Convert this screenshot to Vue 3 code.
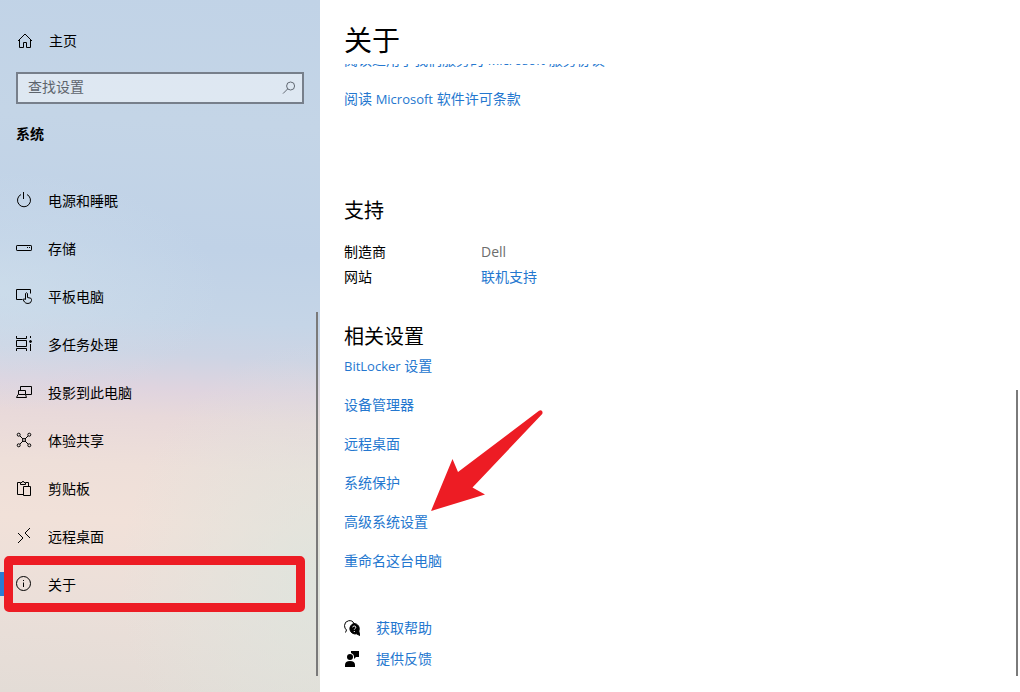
<script setup>
import { ref } from 'vue'

const query = ref('')

const navItems = [
  { id: 'power', label: '电源和睡眠' },
  { id: 'storage', label: '存储' },
  { id: 'tablet', label: '平板电脑' },
  { id: 'multitask', label: '多任务处理' },
  { id: 'project', label: '投影到此电脑' },
  { id: 'share', label: '体验共享' },
  { id: 'clipboard', label: '剪贴板' },
  { id: 'remote', label: '远程桌面' },
  { id: 'about', label: '关于', current: true },
]

const relatedLinks = ['设备管理器', '远程桌面', '系统保护', '高级系统设置', '重命名这台电脑']
</script>

<template>
  <div class="settings">
    <aside class="sidebar">
      <a class="home" href="#home">
        <svg class="icon" viewBox="0 0 16 16" aria-hidden="true">
          <path d="M1 8 8 1l7 7M2.500 6.500v8h4v-5h3v5h4v-8" />
        </svg>
        <span>主页</span>
      </a>

      <form class="search" role="search" @submit.prevent>
        <input v-model="query" type="text" placeholder="查找设置" aria-label="查找设置" />
        <button type="submit" aria-label="搜索">
          <svg class="icon" viewBox="0 0 16 16" aria-hidden="true">
            <circle cx="9.6" cy="6" r="4" />
            <path d="M6.8 8.8 2 13.6" />
          </svg>
        </button>
      </form>

      <h2 class="group">系统</h2>

      <nav class="nav" aria-label="系统">
        <a
          v-for="item in navItems"
          :key="item.id"
          class="nav-item"
          :class="{ current: item.current }"
          :aria-current="item.current ? 'page' : null"
          :href="'#' + item.id"
        >
          <svg class="icon" viewBox="0 0 16 16" aria-hidden="true">
            <template v-if="item.id === 'power'">
              <path d="M5 2.500a6.500 6.500 0 1 0 6 0M7.500 0v7" />
            </template>
            <template v-else-if="item.id === 'storage'">
              <rect x=".5" y="5.500" width="15" height="5" rx=".6" />
              <path d="M11 7.500h1M13 7.500h1" />
            </template>
            <template v-else-if="item.id === 'tablet'">
              <path d="M6.500 11.500h-6v-10h14v4" />
              <path d="M9.500 11.500V5.500q1-1.500 2 0v4l2.700.6q1.300.3 1.300 1.400v1q-.3 3-3.500 3-2.500 0-3.500-1.500L7 11.500q.8-1.200 2.500 0" />
            </template>
            <template v-else-if="item.id === 'multitask'">
              <path d="M.5 0v2.500h10V0M.5 15v-2.500h10V15M.5 4.500h10v6H.5zM14.500 0v2M14.500 8v7" />
              <circle class="solid" cx="14.500" cy="5.500" r="1" />
            </template>
            <template v-else-if="item.id === 'project'">
              <path d="M4.500 6.500v-4h11v8H10M2.500 6.500h7v4h-7zM2 10.500l-1.500 3h10l-1-3" />
            </template>
            <template v-else-if="item.id === 'share'">
              <circle cx="2.700" cy="2.700" r="1.500" />
              <circle cx="13.300" cy="2.700" r="1.500" />
              <circle cx="2.700" cy="13.300" r="1.500" />
              <circle cx="13.300" cy="13.300" r="1.500" />
              <circle cx="8" cy="8" r="1.500" />
              <path d="m4 4 3 3M12 4 9 7M4 12l3-3M12 12 9 9" />
            </template>
            <template v-else-if="item.id === 'clipboard'">
              <path d="M7 14.500H1.500v-12H4M10 2.500h2.500V6M4.500 4.500v-2H6Q7-.5 8 2.500h1.500v2zM7.500 6.500h7v9h-7z" />
            </template>
            <template v-else-if="item.id === 'remote'">
              <path d="m2 5 5 5-5 5M14 0 9 5l5 5" />
            </template>
            <template v-else>
              <circle cx="7.500" cy="7.500" r="7" />
              <path d="M7.500 6.500V11M7.500 4v1" />
            </template>
          </svg>
          <span>{{ item.label }}</span>
        </a>
      </nav>
      <div class="scrollbar"></div>
    </aside>

    <main class="main">
      <h1 class="title">关于</h1>

      <div class="viewport">
        <div class="scrolled">
          <a class="link row" href="#agreement">阅读适用于我们服务的 <span class="latin">Microsoft</span> 服务协议</a>
          <a class="link row" href="#license">阅读 <span class="latin">Microsoft</span> 软件许可条款</a>

          <section class="support">
            <h2>支持</h2>
            <dl>
              <dt>制造商</dt>
              <dd>Dell</dd>
              <dt>网站</dt>
              <dd><a class="link" href="#online">联机支持</a></dd>
            </dl>
          </section>

          <section class="related">
            <h2>相关设置</h2>
            <a class="link row" href="#bitlocker"><span class="latin">BitLocker</span> 设置</a>
            <a v-for="label in relatedLinks" :key="label" class="link row" :href="'#' + label">{{ label }}</a>
          </section>

          <section class="help">
            <a class="link help-link" href="#help">
              <svg class="icon" viewBox="0 0 16 16" aria-hidden="true">
                <path d="M1.500 12.500 2.500 10Q.5 8.500.5 5.500a5 5 0 0 1 9.500-2" />
                <path class="solid" d="M10 3.500a5.300 5.300 0 0 1 4.800 7.500l1 4.500-3.300-1.700A5.300 5.300 0 1 1 10 3.500z" />
                <path class="knockout" d="M8.700 7.300q.2-1.300 1.600-1.300 1.500.1 1.500 1.300 0 .7-.8 1.200-.7.5-.7 1.200M10.300 11v1" />
              </svg>
              <span>获取帮助</span>
            </a>
            <a class="link help-link" href="#feedback">
              <svg class="icon" viewBox="0 0 16 16" aria-hidden="true">
                <circle class="fill" cx="6" cy="6" r="3" />
                <path class="fill" d="M1 16v-2q0-4 5-4t5 4v2zM7 0h8v6h-3l-2 2V6q0-3-3-4z" />
              </svg>
              <span>提供反馈</span>
            </a>
          </section>
        </div>
      </div>

      <svg class="arrow" viewBox="0 0 112 101" aria-hidden="true">
        <path d="M0 101 21.500 49l5.500 13L108 .7q2-1 3 .3t.2 3L41.500 77.500 54 84.500z" />
      </svg>
      <div class="scrollbar"></div>
    </main>
  </div>
</template>

<style>
body {
  margin: 0;
}
</style>

<style scoped>
.settings {
  display: grid;
  grid-template-columns: 320px 1fr;
  min-height: 100vh;
  font: 14px/20px "Open Sans", "Noto Sans CJK SC", sans-serif;
  color: #000;
  background: #fff;
}

h1,
h2,
dl,
dd {
  margin: 0;
  font-weight: 400;
}

a {
  color: inherit;
  text-decoration: none;
}

.icon {
  flex: none;
  width: 16px;
  height: 16px;
  fill: none;
  stroke: #000;
  stroke-width: 1;
}

.icon .solid,
.icon .fill {
  fill: #000;
}

.icon .fill {
  stroke: none;
}

.icon .knockout {
  stroke: #fff;
}

.sidebar {
  position: relative;
  box-sizing: border-box;
  padding-top: 25px;
  background:
    radial-gradient(ellipse 200px 240px at 100% 84%, rgba(220, 229, 222, 0.8), transparent),
    radial-gradient(ellipse 220px 120px at 0 42%, rgba(208, 224, 236, 0.6), transparent),
    linear-gradient(183deg, #c1d3e7 0%, #c4d5e7 18%, #c0d2e7 36%, #c5d5e7 46%, #cdd4e4 51%, #dfd4df 56%, #e8d9da 60%, #eedfd9 67%, #f1e1d9 75%, #ebdfd9 87%, #e3dcd6 100%);
}

.home {
  display: flex;
  align-items: center;
  gap: 16px;
  height: 32px;
  padding-left: 17px;
}

.search {
  display: flex;
  align-items: center;
  box-sizing: border-box;
  height: 32px;
  margin: 15px 16px 0;
  border: 2px solid #777f8b;
  background: rgba(255, 255, 255, 0.45);
}

.search input {
  flex: 1;
  min-width: 0;
  height: 28px;
  padding: 0 10px 3px;
  box-sizing: border-box;
  border: 0;
  outline: 0;
  background: none;
  font: inherit;
  color: #000;
}

.search input::placeholder {
  color: #5d646c;
  opacity: 1;
}

.search button {
  display: flex;
  padding: 0 5px;
  border: 0;
  background: none;
}

.search .icon {
  stroke: #626973;
}

.group {
  margin: 20px 16px 0;
  font-size: 14px;
  line-height: 20px;
  font-weight: 700;
}

.nav {
  margin-top: 33px;
}

.nav-item {
  position: relative;
  display: flex;
  align-items: center;
  gap: 16px;
  height: 48px;
  padding-left: 16px;
}

.nav-item .icon {
  margin-bottom: 2px;
}

.nav-item.current::before {
  content: "";
  position: absolute;
  left: 0;
  top: 11px;
  width: 5px;
  height: 24px;
  background: #2b7cd3;
}

.nav-item.current::after {
  content: "";
  position: absolute;
  inset: -5px 15px -3px 4px;
  border: 9px solid #ed1c24;
  border-radius: 5px;
}

.scrollbar {
  position: absolute;
  right: 2px;
  bottom: 16px;
  width: 2px;
  height: 286px;
  background: #7a7a7a;
}

.sidebar .scrollbar {
  height: 364px;
}

.main {
  position: relative;
  min-width: 0;
}

.title {
  height: 64px;
  box-sizing: border-box;
  padding: 20px 24px 0;
  font-size: 28px;
  line-height: 40px;
}

.viewport {
  overflow: hidden;
}

.scrolled {
  margin-top: -24px;
  padding: 0 24px;
}

.link {
  color: #2477cf;
}

.row {
  display: block;
  height: 39px;
  line-height: 39px;
}

.latin {
  font-size: 13px;
}

h2 {
  font-size: 20px;
  line-height: 28px;
}

.support {
  margin-top: 79px;
}

.support dl {
  display: grid;
  grid-template-columns: 137px 1fr;
  row-gap: 5px;
  margin-top: 17px;
}

.support dd {
  color: #6d6d6d;
}

.related {
  margin-top: 38px;
}

.related h2 {
  height: 21px;
  line-height: 24px;
}

.help {
  margin-top: 32px;
}

.help-link {
  display: flex;
  align-items: center;
  gap: 16px;
  height: 31px;
}

.arrow {
  position: absolute;
  left: 111px;
  top: 410px;
  width: 112px;
  height: 101px;
  fill: #ed1c24;
}
</style>
